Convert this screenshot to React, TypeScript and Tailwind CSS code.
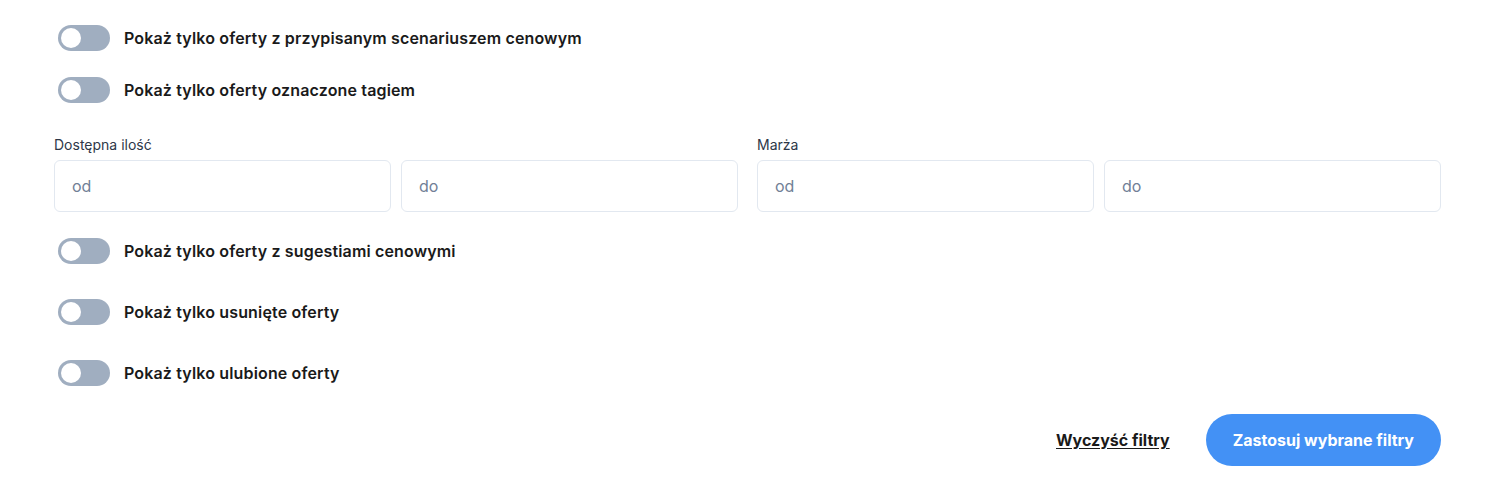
import React, { useState } from 'react';

const Toggle: React.FC<{ label: string }> = ({ label }) => {
  const [on, setOn] = useState(false);
  return (
    <label className="flex items-center gap-[14px] pl-1 cursor-pointer">
      <button
        type="button"
        onClick={() => setOn(!on)}
        className={`relative w-[52px] h-[26px] rounded-full shrink-0 transition-colors ${on ? 'bg-[#4391f5]' : 'bg-[#a0aec0]'}`}
      >
        <span
          className={`absolute top-[3px] left-[3px] w-[20px] h-[20px] rounded-full bg-white transition-transform ${on ? 'translate-x-[26px]' : ''}`}
        />
      </button>
      <span className="text-[16px] font-semibold text-[#1a1a1a] tracking-[0.15px]">{label}</span>
    </label>
  );
};

const RangeField: React.FC<{ label: string }> = ({ label }) => (
  <div className="flex flex-col">
    <span className="text-[14px] text-[#2d3748] leading-5 mb-[5px]">{label}</span>
    <div className="grid grid-cols-2 gap-[10px]">
      <input
        placeholder="od"
        className="h-[52px] rounded-[6px] border border-[#e2e8f0] px-[17px] text-[16px] text-[#2d3748] placeholder:text-[#718096] outline-none"
      />
      <input
        placeholder="do"
        className="h-[52px] rounded-[6px] border border-[#e2e8f0] px-[17px] text-[16px] text-[#2d3748] placeholder:text-[#718096] outline-none"
      />
    </div>
  </div>
);

export default function App() {
  return (
    <div
      className="bg-white min-h-screen pl-[54px] pr-[63px] pt-[25px]"
      style={{ fontFamily: 'Inter, "Noto Sans", sans-serif' }}
    >
      <div className="flex flex-col gap-[26px]">
        <Toggle label="Pokaż tylko oferty z przypisanym scenariuszem cenowym" />
        <Toggle label="Pokaż tylko oferty oznaczone tagiem" />
      </div>

      {/* Ranges */}
      <div className="grid grid-cols-2 gap-[19px] mt-[32px]">
        <RangeField label="Dostępna ilość" />
        <RangeField label="Marża" />
      </div>

      <div className="flex flex-col gap-[35px] mt-[26px]">
        <Toggle label="Pokaż tylko oferty z sugestiami cenowymi" />
        <Toggle label="Pokaż tylko usunięte oferty" />
        <Toggle label="Pokaż tylko ulubione oferty" />
      </div>

      <div className="flex items-center justify-end gap-[36px] mt-[28px]">
        <button className="text-[16px] font-bold text-[#1a1a1a] underline underline-offset-2">Wyczyść filtry</button>
        <button className="h-[52px] px-[27px] rounded-full bg-[#4391f5] text-white text-[16px] font-bold">
          Zastosuj wybrane filtry
        </button>
      </div>
    </div>
  );
}
